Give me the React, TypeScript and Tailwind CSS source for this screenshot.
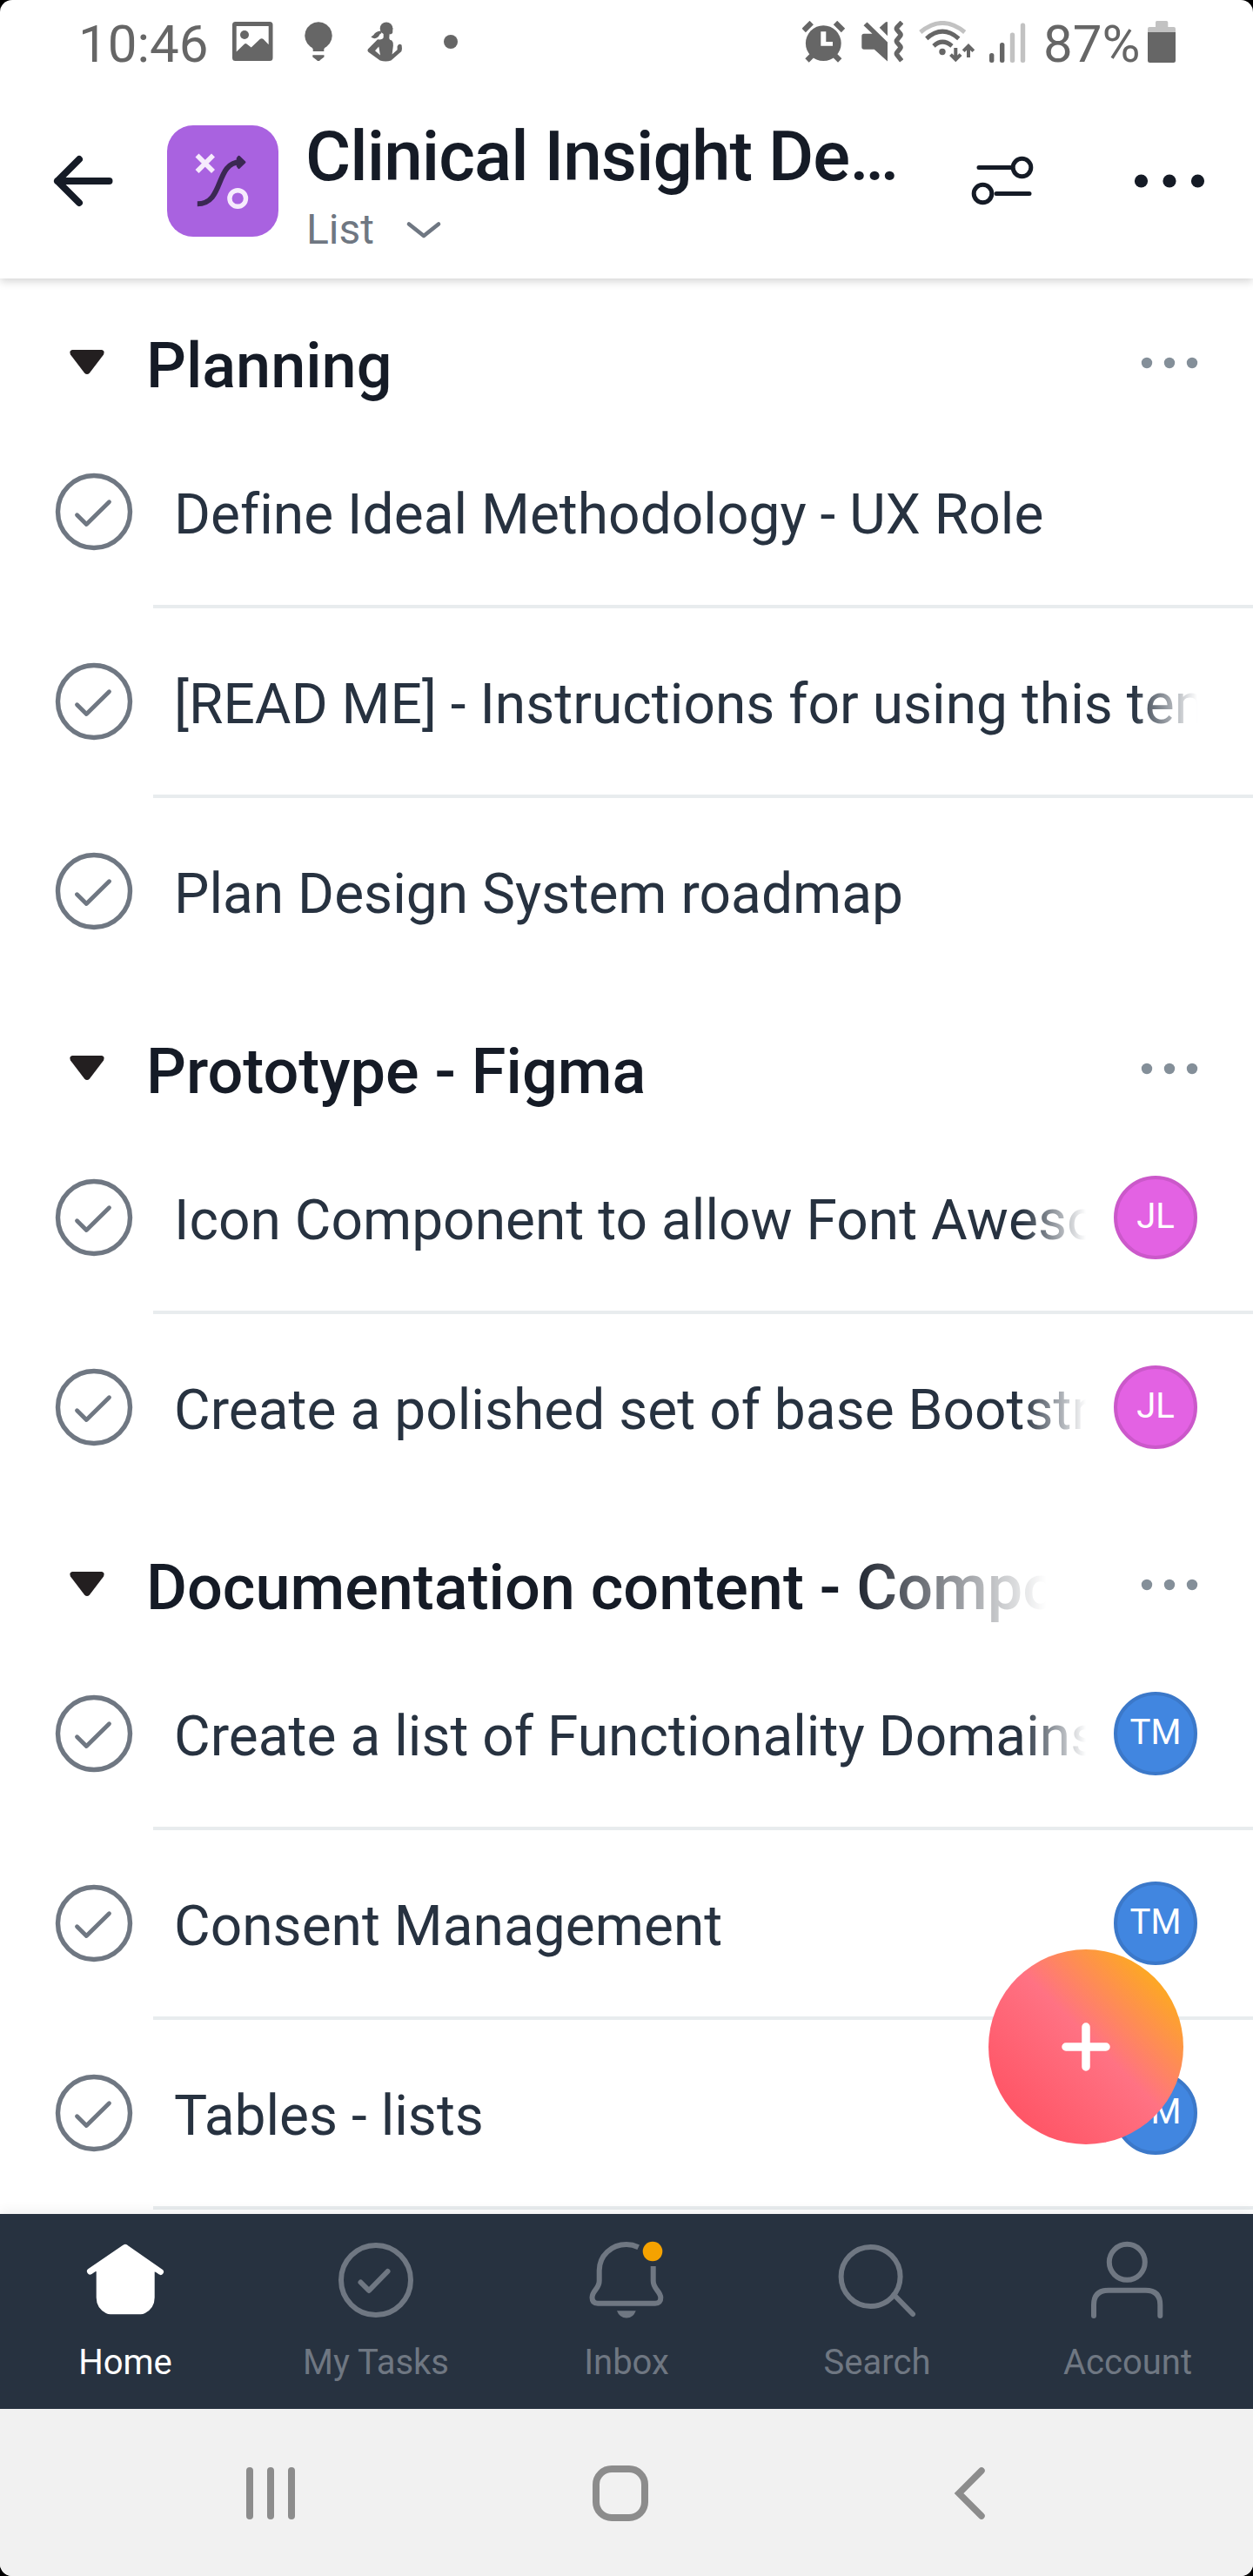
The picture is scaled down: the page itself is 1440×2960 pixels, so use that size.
import React from "react";

type Task = { title: string; assignee?: "JL" | "TM" };
type Section = { title: string; fade?: boolean; tasks: Task[] };

const sections: Section[] = [
  {
    title: "Planning",
    tasks: [
      { title: "Define Ideal Methodology - UX Role" },
      { title: "[READ ME] - Instructions for using this tem" },
      { title: "Plan Design System roadmap" },
    ],
  },
  {
    title: "Prototype - Figma",
    tasks: [
      { title: "Icon Component to allow Font Aweso", assignee: "JL" },
      { title: "Create a polished set of base Bootstr", assignee: "JL" },
    ],
  },
  {
    title: "Documentation content - Compo",
    fade: true,
    tasks: [
      { title: "Create a list of Functionality Domains", assignee: "TM" },
      { title: "Consent Management", assignee: "TM" },
      { title: "Tables - lists", assignee: "TM" },
    ],
  },
];

function StatusBar() {
  return (
    <div className="flex h-24 shrink-0 items-center pr-[89px] pl-[90px] text-[#666]">
      <span className="w-44 pt-[5px] text-[60px] leading-[72px]">10:46</span>
      <svg className="size-12" viewBox="0 0 48 48" fill="currentColor">
        <path
          fillRule="evenodd"
          d="M4.5 1H44a3.5 3.5 0 0 1 3.5 3.5v38A3.5 3.5 0 0 1 44 46H4.5A3.5 3.5 0 0 1 1 42.500v-38A3.500 3.500 0 0 1 4.500 1zM5.700 6v29.500l9-8.800q1.600-1.500 3.200 0l4.800 3.800 10-9.500q2-1.500 4 0l6 6.300V6z"
        />
        <circle cx="15" cy="16" r="5" />
      </svg>
      <svg className="ml-7 size-12" viewBox="0 0 48 48" fill="currentColor">
        <path d="M24 1.300a15.700 15.700 0 0 1 9.500 28.200q-3.200 1.500-3.200 3V35H17.700v-2.500q0-1.500-3.200-3A15.700 15.700 0 0 1 24 1.300zM17.300 39.300h13.200v2.200L26.500 44.600 25 46h-2l-1.700-1.400-4-3.100z" />
      </svg>
      <svg className="ml-7 size-12" viewBox="0 0 48 48" fill="currentColor">
        <circle cx="26" cy="8.700" r="7.300" />
        <path d="M30 8h3.400l-.2 5.500q-.5 2-3.400 2zM19.500 11.500q-6 .5-8 4.500l-3.200 2.500q5 3.500 8.700-.5 1-3 3.500-4zM22.700 14h7l-.4 6q.2 2 3 2.600 2 2 1.600 6l-1.300 10 6-5.300v-4q2-4 5-1.500.8 4-.2 7.300l-12 10.500q-6 2-12.600 0L5.300 35.800q-1.500-1.500-.5-3.400L16 21.300q6 .7 6.700-2.300z" />
        <path fill="#fff" d="M17.300 29.500l-4.300 4.700 6 5.300z" />
      </svg>
      <span className="ml-11 size-4 rounded-full bg-[#666]" />

      <svg className="ml-auto h-12 w-[50px]" viewBox="0 0 50 48" fill="currentColor">
        <circle cx="24.300" cy="25.700" r="20.400" />
        <path
          stroke="currentColor"
          strokeWidth="6.200"
          d="M1.700 11l9-9M38 2l9 9M11 40l-5.500 5.500M37.700 40l5.500 5.500"
        />
        <path fill="#fff" d="M21.300 12.300h6V24H35v4.700H21.300z" />
      </svg>
      <svg className="ml-[18px] size-12" viewBox="0 0 48 48" fill="currentColor">
        <path d="M3 14.700h9.500L2.500 5.200l4-3.700L30 24.500V46.500L14.700 32.700H3q-2.700 0-2.700-2.700V17.400q0-2.700 2.700-2.700zM20.700 7.700l7-6.200Q30 .5 30 2v15.300z" />
        <path
          fill="none"
          stroke="currentColor"
          strokeWidth="5.400"
          strokeLinejoin="round"
          d="M46.500 1.500l-5.800 6.200q-.8 1.200 0 2.300l4 4.800q.8 1.200 0 2.300l-4 5q-.8 1.200 0 2.300l4 4.800q.8 1.200 0 2.300l-4 5q-.8 1.200 0 2.300l5.500 7"
        />
      </svg>
      <svg className="ml-[18px] h-12 w-16" viewBox="0 0 64 48" fill="none" stroke="currentColor" strokeWidth="5">
        <path stroke="#c2c2c2" d="M1.800 13Q27-8 52.700 13" />
        <path d="M8.800 20.300Q27 4 45.800 20.300M17 28.800Q27 19.500 38 28.800" />
        <circle cx="27" cy="35.500" r="3.700" fill="currentColor" stroke="none" />
        <path strokeWidth="4" d="M42.300 31v13M36.500 38.700l5.800 5.800 5.800-5.800M57 42V29M51.200 34.700l5.800-5.800 5.800 5.800" />
      </svg>
      <svg className="ml-4 h-12 w-11" viewBox="0 0 44 48" fill="currentColor">
        <rect x="1" y="37" width="5.400" height="11" rx="2.500" />
        <rect x="13" y="25" width="5.400" height="23" rx="2.500" />
        <rect x="24.800" y="13.500" width="5.400" height="34.500" rx="2.500" fill="#c2c2c2" />
        <rect x="36.800" y="2.500" width="5.400" height="45.500" rx="2.500" fill="#c2c2c2" />
      </svg>
      <span className="ml-[19px] w-[112px] pt-[5px] text-[60px] leading-[72px] whitespace-nowrap">87%</span>
      <svg className="ml-2 h-12 w-8" viewBox="0 0 32 48" fill="currentColor">
        <path fill="#c2c2c2" d="M10.500 0h11q1.800 0 1.800 1.800V7H30q2 0 2 2v4H0V9q0-2 2-2h7V1.800Q9 0 10.500 0z" />
        <path d="M0 13h32v32.500q0 2.500-2.500 2.500h-27Q0 48 0 45.500z" />
      </svg>
    </div>
  );
}

function Header() {
  return (
    <header className="z-10 flex h-56 shrink-0 items-center bg-white pl-[60px] text-[#151b26] shadow-[0_3px_10px_rgba(0,0,0,0.18)] [clip-path:inset(0_0_-24px_0)]">
      <svg
        className="h-16 w-[72px]"
        viewBox="0 0 72 64"
        fill="none"
        stroke="currentColor"
        strokeWidth="8"
        strokeLinecap="round"
        strokeLinejoin="round"
      >
        <path d="M65.500 32H6M31 7L6 32l25 25" />
      </svg>
      <div className="ml-[60px] size-32 rounded-[30px] bg-[#a962e0]">
        <svg className="size-32" viewBox="0 0 128 128" fill="none">
          <path stroke="#f6ebfd" strokeWidth="5.600" d="M34.500 34.500l18.500 18.500M53 34.500L34.500 53" />
          <circle cx="81.200" cy="84" r="9.300" stroke="#f6ebfd" strokeWidth="5.400" />
          <path stroke="#3b2853" strokeWidth="6" d="M34.800 90.300C66 90.300 55 42.600 84 42.300" />
          <path
            fill="#3b2853"
            stroke="#3b2853"
            strokeWidth="2.500"
            strokeLinejoin="round"
            d="M82.500 36l6.700 6.400-6.700 6.400-1.500-2V38z"
          />
        </svg>
      </div>
      <div className="mt-9 ml-[31px] w-[699px] self-start">
        <h1 className="text-[80px] leading-[96px] font-medium tracking-[-0.95px] whitespace-nowrap">
          Clinical Insight De…
        </h1>
        <div className="mt-2 flex items-center text-[#6f7782]">
          <span className="w-[113px] pl-px text-[48px] leading-[56px]">List</span>
          <svg
            className="h-6 w-11"
            viewBox="0 0 44 24"
            fill="none"
            stroke="currentColor"
            strokeWidth="4.600"
            strokeLinecap="round"
            strokeLinejoin="round"
          >
            <path d="M6 5.500l17 13.500L40 5.500" />
          </svg>
        </div>
      </div>
      <svg
        className="ml-[62px] h-16 w-[78px]"
        viewBox="0 0 78 64"
        fill="none"
        stroke="currentColor"
        strokeWidth="5"
        strokeLinecap="round"
      >
        <path d="M13 16.500h38M33 46.500h38" />
        <circle cx="62.500" cy="16.500" r="10.300" />
        <circle cx="17.500" cy="46.500" r="10.300" />
      </svg>
      <svg className="ml-[110px] h-4 w-[88px]" viewBox="0 0 88 16" fill="currentColor">
        <circle cx="11.500" cy="8" r="7.600" />
        <circle cx="44" cy="8" r="7.600" />
        <circle cx="76.500" cy="8" r="7.600" />
      </svg>
    </header>
  );
}

function SectionHeader({ title, fade }: { title: string; fade?: boolean }) {
  return (
    <div className="flex h-[157px] items-center pt-[29px] pr-[62px] pl-20">
      <svg className="h-8 w-10" viewBox="0 0 40 32" fill="#231f20">
        <path d="M3.500 1h33Q41 1.500 39 6.500L23 27.500q-3 3-6 0L1 6.500Q-1 1.500 3.500 1z" />
      </svg>
      <h2
        className={
          fade
            ? "ml-12 w-[1034px] overflow-hidden pt-[8px] text-[72px] leading-[92px] font-medium whitespace-nowrap text-[#151b26] [mask-image:linear-gradient(to_right,#000_806px,transparent_1034px)]"
            : "ml-12 w-[1034px] overflow-hidden pt-[8px] text-[72px] leading-[92px] font-medium whitespace-nowrap text-[#151b26]"
        }
      >
        {title}
      </h2>
      <svg className="ml-auto h-4 w-[68px]" viewBox="0 0 68 16" fill="#848f99">
        <circle cx="8" cy="8" r="6.200" />
        <circle cx="34" cy="8" r="6.200" />
        <circle cx="60" cy="8" r="6.200" />
      </svg>
    </div>
  );
}

function TaskRow({ task, divider }: { task: Task; divider: boolean }) {
  return (
    <div>
      <div className="flex h-[214px] items-center pr-16 pl-[60px]">
        <svg
          className="size-24 shrink-0"
          viewBox="0 0 96 96"
          fill="none"
          stroke="#6f7782"
          strokeLinecap="round"
          strokeLinejoin="round"
        >
          <circle cx="48" cy="48" r="41.500" strokeWidth="5.400" />
          <path strokeWidth="4.800" d="M28.500 51.700l10.800 10.800L65.500 36.700" />
        </svg>
        <p
          className={
            task.assignee
              ? "ml-11 w-[1048px] overflow-hidden pt-[8px] text-[64px] leading-[84px] tracking-[0.03px] whitespace-nowrap text-[#273240] [mask-image:linear-gradient(to_right,#000_974px,transparent_1048px)]"
              : "ml-11 w-[1176px] overflow-hidden pt-[8px] text-[64px] leading-[84px] tracking-[0.03px] whitespace-nowrap text-[#273240] [mask-image:linear-gradient(to_right,#000_1102px,transparent_1176px)]"
          }
        >
          {task.title}
        </p>
        {task.assignee && (
          <span
            className={
              task.assignee === "JL"
                ? "ml-8 flex size-24 items-center justify-center rounded-full border-4 border-[#cb58ca] bg-[#e362e3] pb-[3px] text-[40px] leading-[48px] text-white"
                : "ml-8 flex size-24 items-center justify-center rounded-full border-4 border-[#3b78c9] bg-[#4186e0] pb-[3px] text-[40px] leading-[48px] text-white"
            }
          >
            {task.assignee}
          </span>
        )}
      </div>
      <div className={divider ? "ml-44 h-1 bg-[#e8ecee]" : "h-1"} />
    </div>
  );
}

function NavItem({ label, active, children }: { label: string; active?: boolean; children: React.ReactNode }) {
  return (
    <div
      className={
        active
          ? "flex flex-1 flex-col items-center pt-7 text-white"
          : "flex flex-1 flex-col items-center pt-7 text-[#6f7782]"
      }
    >
      <svg
        className="size-24"
        viewBox="0 0 96 96"
        fill="none"
        stroke="currentColor"
        strokeWidth="6"
        strokeLinecap="round"
        strokeLinejoin="round"
      >
        {children}
      </svg>
      <span className="mt-[23px] text-[40px] leading-[48px]">{label}</span>
    </div>
  );
}

function TabBar() {
  return (
    <nav className="z-10 flex h-56 shrink-0 bg-[#273240] shadow-[0_-2px_14px_rgba(0,0,0,0.08)] [clip-path:inset(-24px_0_0_0)]">
      <NavItem label="Home" active>
        <path strokeWidth="7" fill="currentColor" d="M7.500 38L47 11q1-1 2 0L88.500 38.500" stroke="none" />
        <path strokeWidth="7" d="M7.500 38L47 11q1-1 2 0L88.500 38.500" />
        <path
          fill="currentColor"
          stroke="none"
          d="M14.700 34L48 12l33.700 22v34q0 12-11 18-2.500 1.300-5 1.300H31q-3 0-5.300-1.300-11-6-11-18z"
        />
      </NavItem>
      <NavItem label="My Tasks">
        <circle cx="48" cy="48" r="40" />
        <path d="M30.500 50.500l9.500 9.500L61.500 38" />
      </NavItem>
      <NavItem label="Inbox">
        <path
          strokeLinecap="butt"
          d="M61.700 10.200Q55 7 48 7C30.500 7 16.700 20 16.700 37V49C16.700 58 8.500 60 8.500 68Q8.500 74.700 15 74.700H81Q87.500 74.700 87.300 68C87 61 78.700 58 78.700 49V32"
        />
        <path fill="currentColor" stroke="none" d="M37 83.300h21.700Q56 91.500 48 91.500T37 83.300z" />
        <circle cx="78" cy="15" r="11.300" fill="#f5a200" stroke="none" />
      </NavItem>
      <NavItem label="Search">
        <circle cx="40.600" cy="44" r="34" />
        <path d="M67.500 65L89 87" />
      </NavItem>
      <NavItem label="Account">
        <circle cx="47.300" cy="27.300" r="20.500" />
        <path d="M9 89V76.500Q9 59.700 26 59.700H68.500Q85.300 59.700 85.300 76.500V89" />
      </NavItem>
    </nav>
  );
}

function SystemBar() {
  return (
    <div className="flex h-48 shrink-0 items-center bg-[#f1f1f1] pt-0.5 pl-[279px]">
      <svg className="size-16" viewBox="0 0 64 64" stroke="#8c8c8c" strokeWidth="8" strokeLinecap="round">
        <path d="M8 6v52M32 6v52M56 6v52" />
      </svg>
      <svg className="ml-[338px] size-16" viewBox="0 0 64 64" fill="none" stroke="#8c8c8c" strokeWidth="8">
        <rect x="4" y="4" width="56" height="56" rx="18" />
      </svg>
      <svg
        className="ml-[339px] size-16"
        viewBox="0 0 64 64"
        fill="none"
        stroke="#8c8c8c"
        strokeWidth="7.500"
        strokeLinecap="round"
      >
        <path d="M44 6L18 32l26 26" />
      </svg>
    </div>
  );
}

export default function App() {
  return (
    <div className="h-[2960px] w-[1440px] bg-black font-['Roboto',sans-serif]">
      <div className="relative flex h-full flex-col overflow-hidden rounded-[14px] bg-white">
        <StatusBar />
        <Header />
        <main className="min-h-0 flex-1 overflow-hidden pt-1">
          {sections.map((section, s) => (
            <section key={section.title}>
              <SectionHeader title={section.title} fade={section.fade} />
              {section.tasks.map((task, i) => (
                <TaskRow
                  key={task.title}
                  task={task}
                  divider={i < section.tasks.length - 1 || s === sections.length - 1}
                />
              ))}
            </section>
          ))}
        </main>
        <TabBar />
        <SystemBar />
        <button className="absolute right-20 bottom-[496px] z-20 flex size-56 items-center justify-center rounded-full bg-[linear-gradient(45deg,#ff5263_10%,#ff7283_53%,#fda725_85%)]">
          <svg className="size-14" viewBox="0 0 56 56" stroke="#fff" strokeWidth="9.500" strokeLinecap="round">
            <path d="M28 5v46M5 28h46" />
          </svg>
        </button>
      </div>
    </div>
  );
}
